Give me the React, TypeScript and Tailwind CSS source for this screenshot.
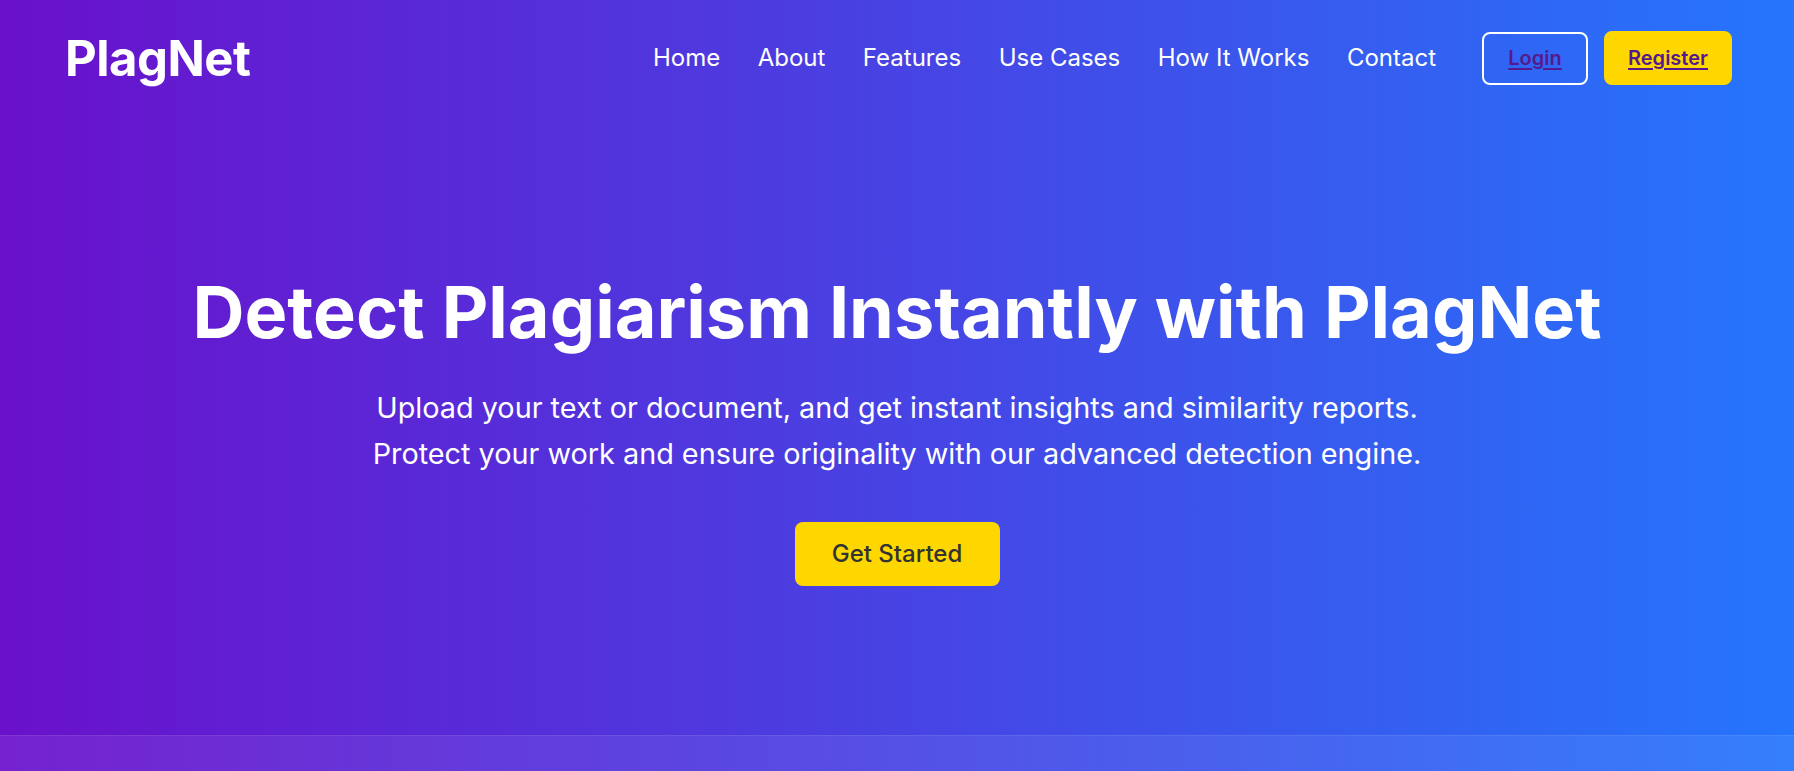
import React from "react";

export default function App() {
  const links = ["Home", "About", "Features", "Use Cases", "How It Works", "Contact"];
  return (
    <div className="h-[771px] overflow-hidden bg-[linear-gradient(to_right,#6a11cb,#2575fc)] font-[Inter,'Noto_Sans',sans-serif] text-white">
      <header className="flex items-center justify-between pl-[65px] pr-[62px] h-[116px]">
        <div className="text-[49px] font-bold leading-none tracking-[-0.5px]">PlagNet</div>
        <nav className="flex items-center">
          <ul className="flex items-center gap-[37.5px] text-[24px]">
            {links.map((l) => (
              <li key={l}>
                <span>{l}</span>
              </li>
            ))}
          </ul>
          <div className="ml-[46px] flex items-center gap-4">
            <a className="box-border flex h-[53px] w-[106px] items-center justify-center rounded-lg border-2 border-white text-[20px] font-semibold text-[#551A8B] underline underline-offset-[3px]">
              Login
            </a>
            <a className="box-border flex h-[54px] w-[128px] items-center justify-center rounded-lg border-2 border-[#FFD700] bg-[#FFD700] text-[20px] font-semibold text-[#551A8B] underline underline-offset-[3px]">
              Register
            </a>
          </div>
        </nav>
      </header>
      <section className="flex h-[620px] flex-col items-center justify-center border-b border-white/15 pt-[4px] text-center">
        <h1 className="text-[72px] font-bold leading-[1.2]">Detect Plagiarism Instantly with PlagNet</h1>
        <p className="mt-[30px] text-[28.8px] leading-[1.6]">
          Upload your text or document, and get instant insights and similarity reports.
          <br />
          Protect your work and ensure originality with our advanced detection engine.
        </p>
        <button className="mt-[45px] h-[64px] w-[205px] rounded-lg bg-[#FFD700] text-[24px] font-medium text-[#333]">
          Get Started
        </button>
      </section>
      <section className="h-[200px] bg-white/[0.07]"></section>
    </div>
  );
}
